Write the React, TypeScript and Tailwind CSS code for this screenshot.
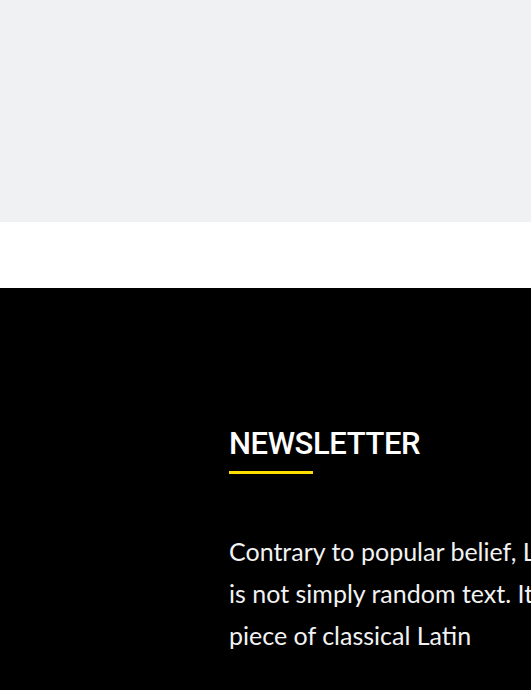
export default function App() {
  return (
    <div className="w-[531px] h-[690px] overflow-hidden bg-white">
      {/* Top section */}
      <section className="h-[222px] bg-[#f0f1f3]" />
      <div className="h-[66px] bg-white" />

      {/* Footer */}
      <footer className="bg-black h-[402px] pl-[229px] pt-[136px]">
        <div className="w-[457px]">
          <h3 className="font-['Roboto',sans-serif] font-medium text-[31px] leading-[40px] text-white tracking-[-0.4px]">
            NEWSLETTER
          </h3>
          <div className="mt-[7px] h-[3px] w-[84px] bg-[#ffdf00]" />
          <p className="mt-[56px] font-['Lato',sans-serif] text-[25px] leading-[42px] text-[#f2f2f2]">
            Contrary to popular belief, Lorem Ipsum is not simply random text. It has roots in a piece of classical Latin
          </p>
        </div>
      </footer>
    </div>
  );
}
